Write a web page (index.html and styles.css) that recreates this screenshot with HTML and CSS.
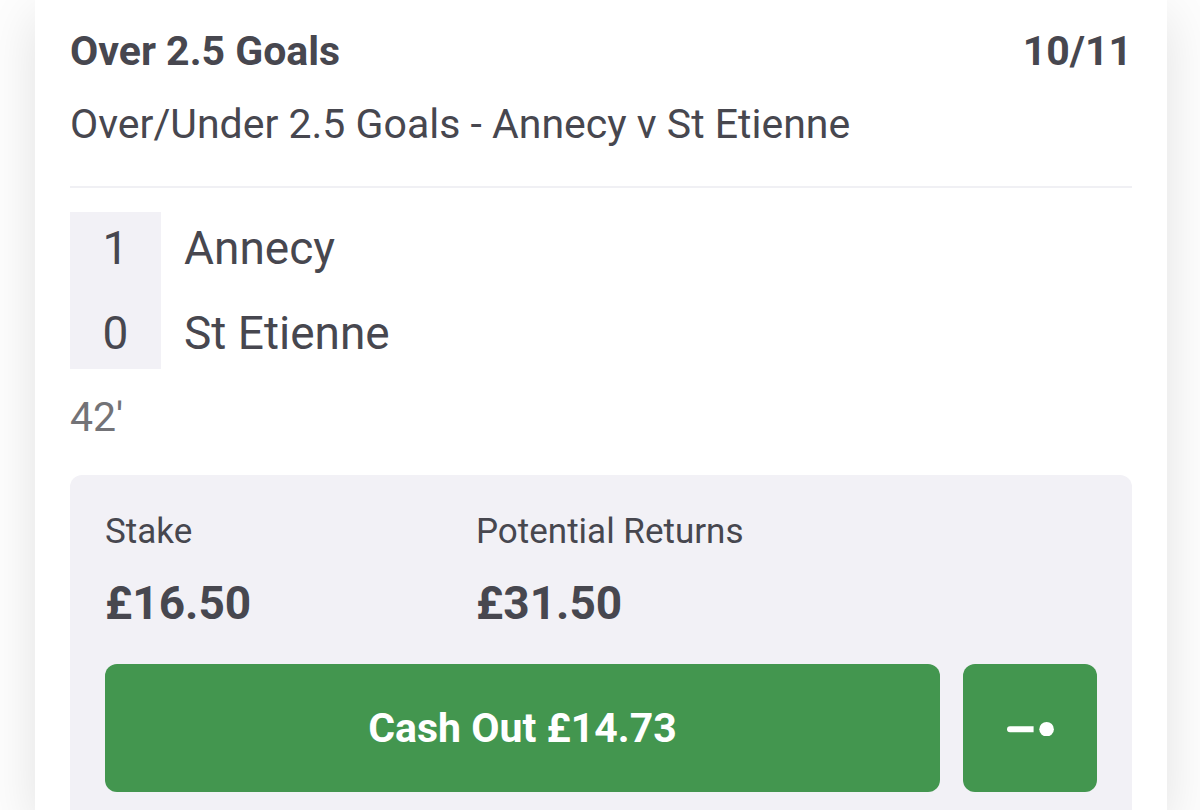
FILE: index.html
```html
<!DOCTYPE html>
<html lang="en">
  <head>
    <meta charset="UTF-8">
    <meta name="viewport" content="width=device-width, initial-scale=1.0">
    <title>My Bets</title>

    <link rel="stylesheet" href="styles.css">
  </head>

  <body>
    <main class="bet-card">
      <header class="selection">
        <h1>Over 2.5 Goals</h1>
        <span class="odds">10/11</span>
      </header>
      <p class="market">Over/Under 2.5 Goals - Annecy v St Etienne</p>

      <section class="scoreboard">
        <div class="scores">
          <span>1</span>
          <span>0</span>
        </div>
        <div class="teams">
          <span>Annecy</span>
          <span>St Etienne</span>
        </div>
      </section>
      <p class="clock">42'</p>

      <section class="cashout">
        <dl class="totals">
          <div>
            <dt>Stake</dt>
            <dd>£16.50</dd>
          </div>
          <div>
            <dt>Potential Returns</dt>
            <dd>£31.50</dd>
          </div>
        </dl>
        <div class="actions">
          <button type="button" class="btn btn-cashout">Cash Out £14.73</button>
          <button type="button" class="btn btn-partial" aria-label="Partial cash out">
            <svg width="48" height="16" viewBox="0 0 48 16" fill="#fff">
              <path d="M4 6.2H27.6V12.2H4a3 3 0 0 1 0-6z" />
              <circle cx="40.6" cy="9.2" r="7.3" />
            </svg>
          </button>
        </div>
      </section>
    </main>
  </body>
</html>
```
FILE: styles.css
```css
* {
  box-sizing: border-box;
}

body {
  margin: 0;
  background-color: #fdfdfd;
  color: #47474f;
  font-family: Roboto, 'Liberation Sans', sans-serif;
}

h1, p, dl, dd {
  margin: 0;
}

.bet-card {
  margin: 0 33px 0 35px;
  padding: 27px 35px 0;
  background-color: #fff;
  box-shadow: 0 16px 48px rgba(0, 0, 0, 0.11);
}

.selection {
  display: flex;
  justify-content: space-between;
  font-size: 41px;
  font-weight: 700;
  line-height: 48px;
}

.selection h1 {
  font-size: 41px;
}

.market {
  padding: 25px 0 38px;
  border-bottom: 2px solid #f0f0f4;
  font-size: 41px;
  line-height: 48px;
}

.scoreboard {
  display: flex;
  gap: 23px;
  margin-top: 24px;
  font-size: 46px;
  line-height: 72px;
}

.scores, .teams {
  display: flex;
  flex-direction: column;
  gap: 13px;
}

.scores {
  width: 91px;
  background-color: #f2f1f6;
  text-align: center;
}

.clock {
  margin-top: 24px;
  color: #737377;
  font-size: 41px;
  line-height: 48px;
}

.cashout {
  margin-top: 34px;
  padding: 36px 35px 18px;
  border-radius: 12px 12px 0 0;
  background-color: #f2f1f6;
}

.totals {
  display: grid;
  grid-template-columns: 371px 1fr;
}

.totals dt {
  font-size: 35px;
  line-height: 42px;
}

.totals dd {
  margin-top: 22px;
  font-size: 46px;
  font-weight: 700;
  line-height: 56px;
}

.actions {
  display: flex;
  gap: 23px;
  margin-top: 33px;
}

.btn {
  height: 128px;
  border: 0;
  border-radius: 12px;
  background-color: #43964f;
  color: #fff;
  font-family: inherit;
  font-size: 41px;
  font-weight: 700;
  cursor: pointer;
}

.btn-cashout {
  flex: 1;
}

.btn-partial {
  display: flex;
  justify-content: center;
  align-items: center;
  width: 134px;
}
```
